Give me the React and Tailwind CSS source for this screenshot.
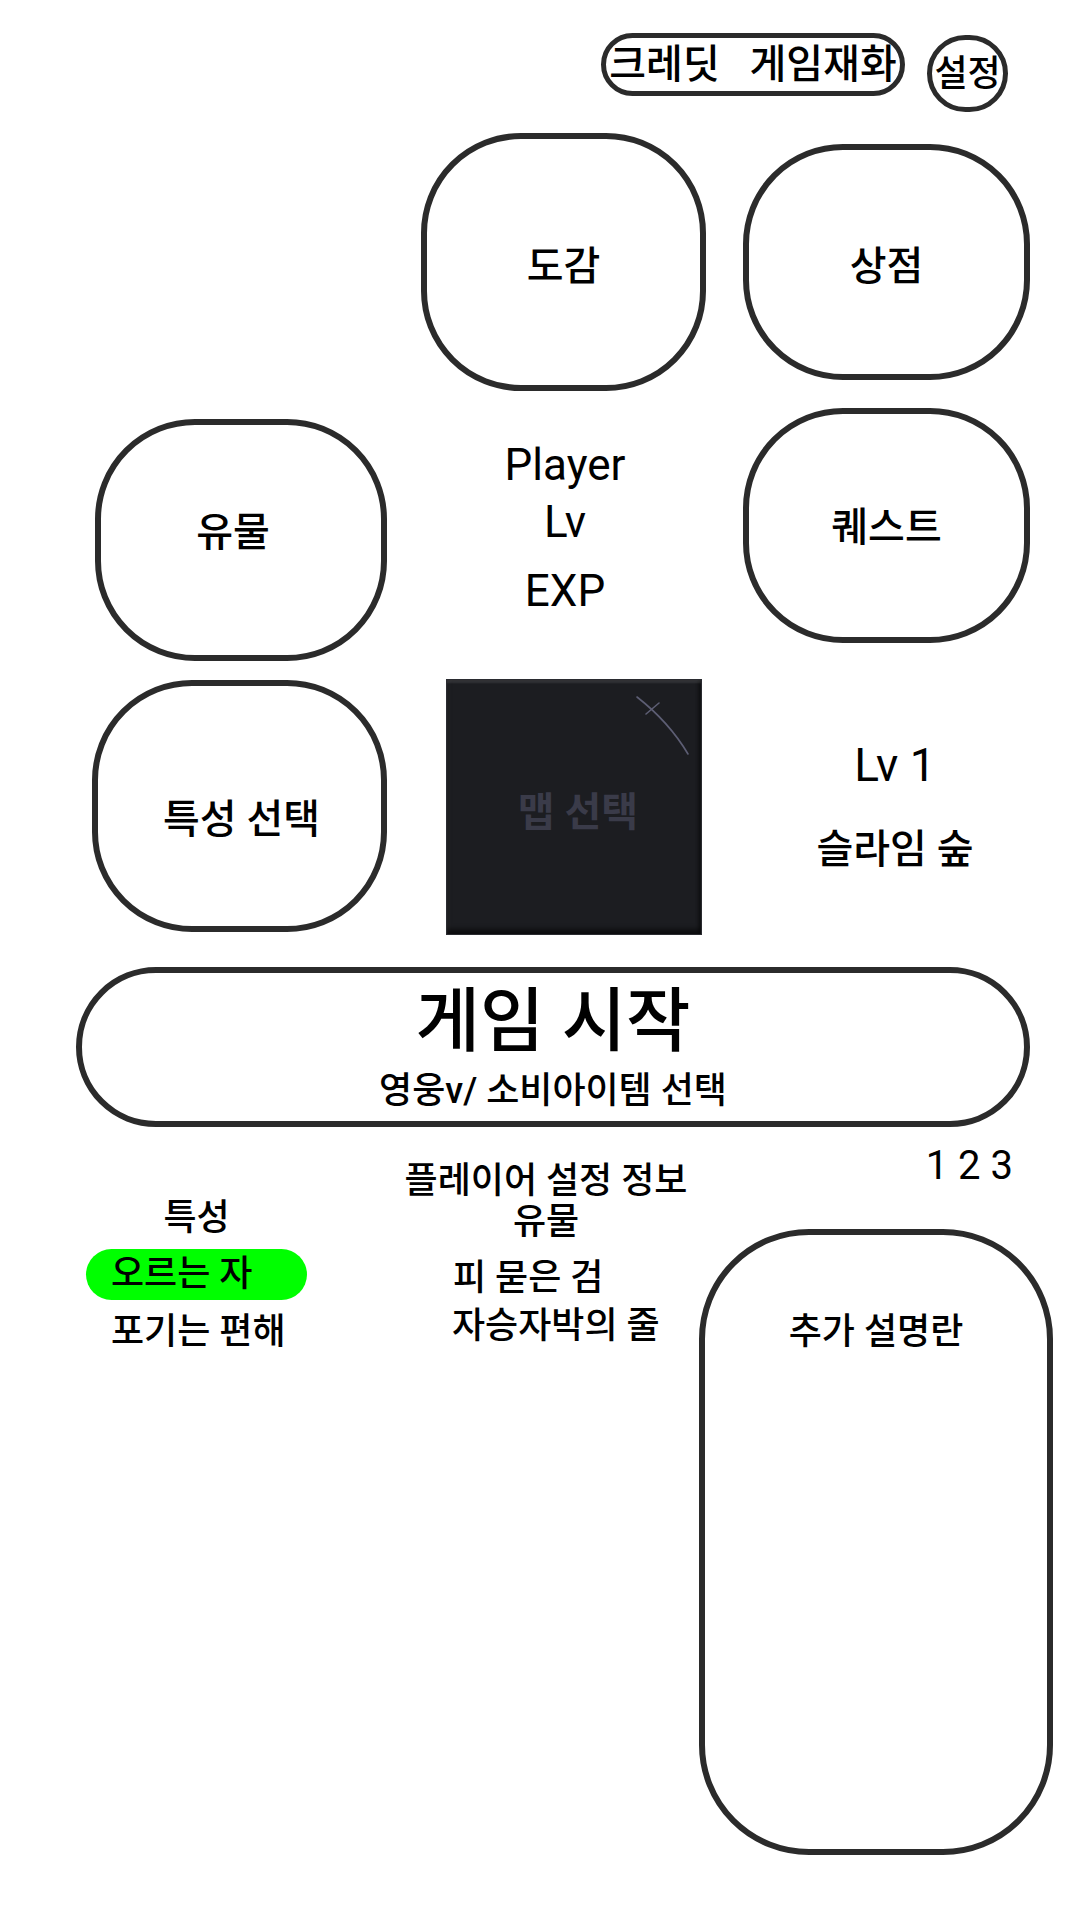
import React from "react";

const box =
  "border-[6px] border-[#2b2b2b] bg-white flex items-center justify-center text-[40px] leading-[48px] font-medium text-black shrink-0";

export default function App() {
  return (
    <div className="w-[1092px] h-[1932px] bg-white overflow-hidden text-black font-['Roboto','Noto_Sans_CJK_KR',sans-serif]">
      {/* top bar */}
      <div className="flex justify-end items-start pt-[33px] pr-[84px] gap-[22px]">
        <div className="w-[304px] h-[63px] rounded-full border-[5px] border-[#2b2b2b] flex items-center justify-center text-[40px] leading-none font-medium whitespace-pre">
          크레딧   게임재화
        </div>
        <div className="mt-[2px] w-[81px] h-[77px] rounded-full border-[5px] border-[#2b2b2b] flex items-center justify-center text-[36px] leading-none font-medium whitespace-nowrap">
          설정
        </div>
      </div>

      {/* row 2 */}
      <div className="flex items-center pl-[421px] gap-[37px] mt-[21px]">
        <div className={`${box} w-[285px] h-[258px] rounded-[100px] pt-[10px]`}>도감</div>
        <div className={`${box} w-[287px] h-[236px] rounded-[100px] pt-[10px]`}>상점</div>
      </div>

      {/* row 3 */}
      <div className="flex items-start mt-[17px]">
        <div className={`${box} ml-[95px] mt-[11px] w-[292px] h-[242px] rounded-[100px] pr-[16px] pb-[14px]`}>
          유물
        </div>
        <div className="w-[356px] flex flex-col items-center text-[44px] leading-[44px] pt-[35px]">
          <div>Player</div>
          <div className="mt-[13px]">Lv</div>
          <div className="mt-[25px]">EXP</div>
        </div>
        <div className={`${box} w-[287px] h-[235px] rounded-[100px] pt-[5px]`}>퀘스트</div>
      </div>

      {/* row 4 */}
      <div className="flex items-start mt-[18px]">
        <div className={`${box} ml-[92px] mt-[1px] w-[295px] h-[252px] rounded-[100px] pt-[28px] pl-[4px]`}>
          특성 선택
        </div>
        <div className="relative ml-[59px] w-[256px] h-[256px] shrink-0 bg-[#1c1d21] border border-[#2a2b30] shadow-[inset_0_3px_2px_rgba(255,255,255,0.10),inset_0_-5px_5px_rgba(0,0,0,0.55),inset_3px_0_3px_rgba(255,255,255,0.04),inset_-3px_0_3px_rgba(0,0,0,0.3)] flex items-center justify-center pt-[12px] pl-[8px]">
          <span className="text-[40px] leading-none font-bold text-[#3a3b49]">맵 선택</span>
          <svg
            className="absolute left-0 top-0"
            width="256"
            height="256"
            viewBox="0 0 256 256"
            fill="none"
          >
            <path d="M190 17 Q222 42 241 74" stroke="#5d5e74" strokeWidth="1.6" strokeLinecap="round" />
            <path d="M199 34 L212 23" stroke="#5d5e74" strokeWidth="1.6" strokeLinecap="round" />
          </svg>
        </div>
        <div className="ml-[43px] w-[300px] flex flex-col items-center">
          <div className="mt-[63px] text-[46px] leading-[46px]">Lv 1</div>
          <div className="mt-[38px] text-[40px] leading-[48px] font-medium">슬라임 숲</div>
        </div>
      </div>

      {/* row 5: start */}
      <div className="ml-[76px] mt-[32px] w-[954px] h-[160px] rounded-full border-[6px] border-[#2b2b2b] flex flex-col items-center pt-[13px]">
        <div className="text-[70px] leading-[72px] font-medium">게임 시작</div>
        <div className="mt-[13px] text-[36px] leading-[40px] font-medium">영웅v/ 소비아이템 선택</div>
      </div>

      {/* row 6 */}
      <div className="flex items-start">
        {/* left column */}
        <div className="ml-[86px] w-[221px] flex flex-col items-center text-[36px] leading-[40px] font-medium">
          <div className="mt-[71px]">특성</div>
          <div className="mt-[11px] w-full h-[51px] rounded-full bg-[#00ff00] pl-[25px] leading-[51px] whitespace-nowrap">
            오르는 자
          </div>
          <div className="mt-[12px] self-start pl-[25px] whitespace-nowrap">포기는 편해</div>
        </div>

        {/* middle column */}
        <div className="ml-[89px] w-[300px] flex flex-col items-center text-[36px] leading-[40px] font-medium">
          <div className="mt-[34px] whitespace-nowrap">플레이어 설정 정보</div>
          <div className="mt-[1px]">유물</div>
          <div className="mt-[16px] self-start pl-[57px] whitespace-nowrap">피 묻은 검</div>
          <div className="mt-[8px] self-start pl-[56px] whitespace-nowrap">자승자박의 줄</div>
        </div>

        {/* right column */}
        <div className="ml-[3px] w-[354px] flex flex-col">
          <div className="mt-[19px] self-end mr-[40px] text-[40px] leading-[40px]">1 2 3</div>
          <div className="mt-[43px] w-[354px] h-[626px] rounded-[110px] border-[6px] border-[#2b2b2b] flex flex-col items-center pt-[77px]">
            <div className="text-[36px] leading-[40px] font-medium">추가 설명란</div>
          </div>
        </div>
      </div>
    </div>
  );
}
